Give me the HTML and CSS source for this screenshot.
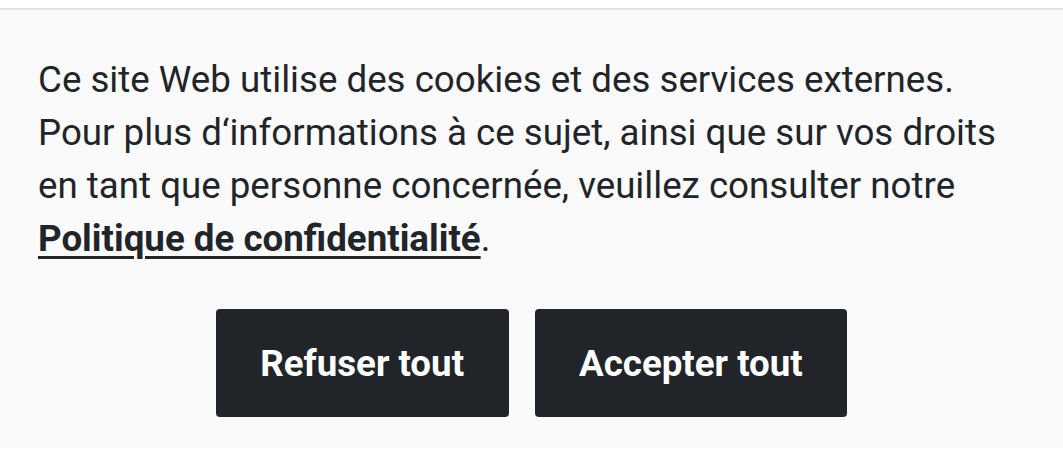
FILE: index.html
```html
<!DOCTYPE html>
<html lang="fr">
<head>
<meta charset="utf-8">
<link rel="stylesheet" href="styles.css">
</head>
<body>
<div class="banner">
  <p class="text">Ce site Web utilise des cookies et des services externes. Pour plus d‘informations à ce sujet, ainsi que sur vos droits en tant que personne concernée, veuillez consulter notre <a class="link" href="#">Politique de confidentialité</a>.</p>
  <div class="actions">
    <button class="btn">Refuser tout</button>
    <button class="btn">Accepter tout</button>
  </div>
</div>
</body>
</html>
```
FILE: styles.css
```css
html, body {
  margin: 0;
  padding: 0;
  background: #ffffff;
  overflow: hidden;
}
body {
  padding-top: 8px;
  font-family: Roboto, "Liberation Sans", sans-serif;
  color: #212529;
}
.banner {
  background: #fafafa;
  border-top: 2px solid #e2e2e2;
  padding: 43px 38px 40px;
  height: 440px;
  box-sizing: border-box;
}
.text {
  margin: 0;
  font-size: 36.7px;
  line-height: 53px;
}
.link {
  color: #212529;
  font-weight: 700;
  text-decoration: underline;
  text-decoration-thickness: 3px;
  text-underline-offset: 5px;
}
.actions {
  display: flex;
  justify-content: center;
  gap: 26px;
  margin-top: 44px;
}
.btn {
  background: #212529;
  color: #ffffff;
  border: none;
  border-radius: 4px;
  height: 108px;
  padding: 0 44.5px;
  font-family: Roboto, "Liberation Sans", sans-serif;
  font-weight: 700;
  font-size: 36.7px;
}
```
